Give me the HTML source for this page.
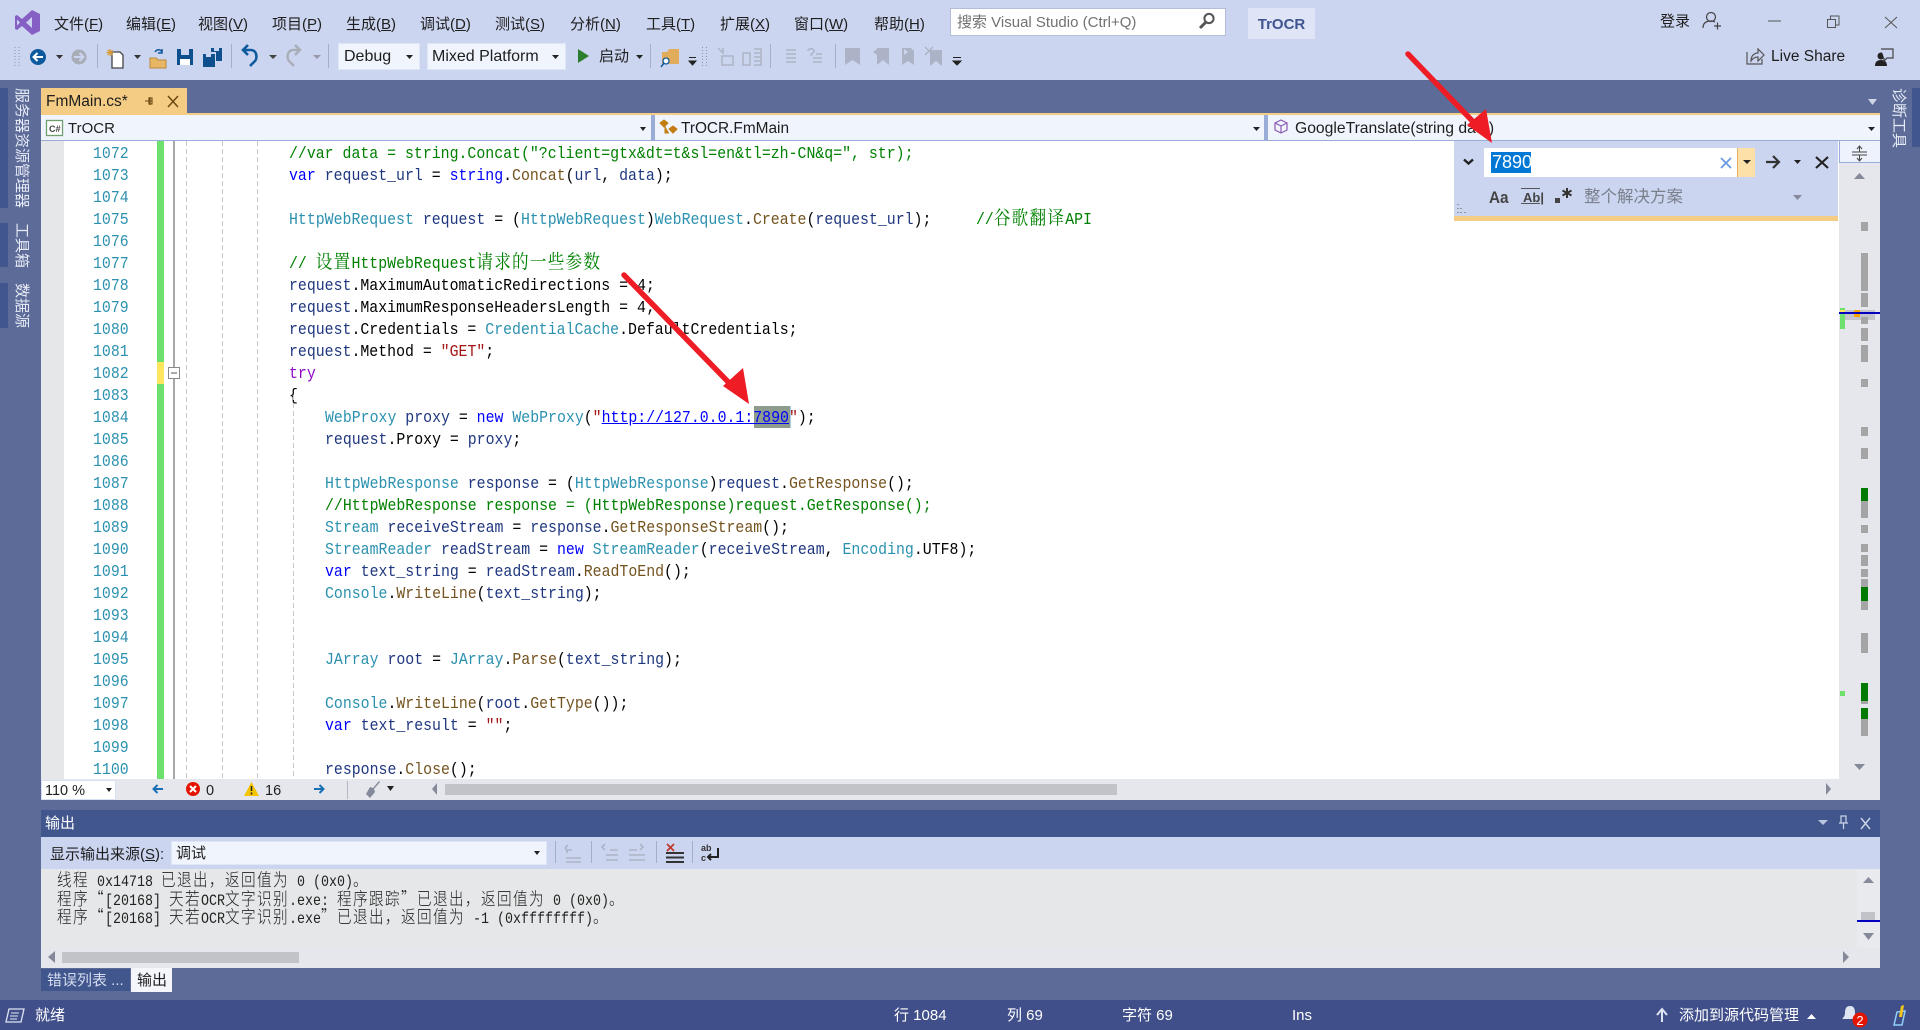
<!DOCTYPE html>
<html lang="zh-CN"><head><meta charset="utf-8"><title>TrOCR</title>
<style>
html,body{margin:0;padding:0;width:1920px;height:1030px;overflow:hidden;background:#5d6b99}
body{position:relative;font-family:"Liberation Sans","Noto Sans CJK SC",sans-serif;font-size:15px;color:#1e1e1e}
.b{position:absolute}
.t{position:absolute;white-space:nowrap;line-height:20px;height:20px;margin-top:1px}
.v{position:absolute;writing-mode:vertical-rl;text-orientation:sideways;white-space:nowrap;color:#e6eaf5;font-size:15px;line-height:20px;width:20px}
.l,.n{position:absolute;white-space:pre;margin-top:1px;font-family:"Liberation Mono","Noto Serif CJK SC",monospace;font-size:17px;line-height:22px;height:22px;transform:scaleX(.8745);transform-origin:0 0}
.n{left:92.5px;color:#2b91af}
.l{color:#000}
.l i{font-style:normal;font-family:"Noto Serif CJK SC",serif;font-size:19px;letter-spacing:1.4px;line-height:0}
.k{color:#0000ff}.y{color:#2b91af}.a{color:#1f377f}.m{color:#74531f}.s{color:#a31515}.c{color:#008000}.p{color:#8f08c4}.u{color:#0000ff;text-decoration:underline}
.o{position:absolute;left:57px;white-space:pre;font-family:"Liberation Mono","Noto Sans CJK SC",monospace;font-size:16px;line-height:18px;height:18px;color:#222;transform:scaleX(.8333);transform-origin:0 0}
.o i{font-style:normal;font-family:"Noto Sans CJK SC",sans-serif;font-weight:300;font-size:17.5px;letter-spacing:1.7px;line-height:0}
svg{position:absolute;left:0;top:0}
</style></head><body>
<!-- top chrome -->
<div class="b" style="left:0;top:0;width:1920px;height:80px;background:#ccd5f0"></div>
<div class="t" style="left:54px;top:14px">文件(<u>F</u>)</div>
<div class="t" style="left:126px;top:14px">编辑(<u>E</u>)</div>
<div class="t" style="left:198px;top:14px">视图(<u>V</u>)</div>
<div class="t" style="left:272px;top:14px">项目(<u>P</u>)</div>
<div class="t" style="left:346px;top:14px">生成(<u>B</u>)</div>
<div class="t" style="left:420px;top:14px">调试(<u>D</u>)</div>
<div class="t" style="left:495px;top:14px">测试(<u>S</u>)</div>
<div class="t" style="left:570px;top:14px">分析(<u>N</u>)</div>
<div class="t" style="left:646px;top:14px">工具(<u>T</u>)</div>
<div class="t" style="left:720px;top:14px">扩展(<u>X</u>)</div>
<div class="t" style="left:794px;top:14px">窗口(<u>W</u>)</div>
<div class="t" style="left:874px;top:14px">帮助(<u>H</u>)</div>
<div class="b" style="left:950px;top:8px;width:274px;height:26px;background:#fff;border:1px solid #b4bcd6"></div>
<div class="t" style="left:957px;top:12px;color:#717171">搜索 Visual Studio (Ctrl+Q)</div>
<div class="b" style="left:1248px;top:8px;width:67px;height:31px;background:#dfe4f7"></div>
<div class="t" style="left:1248px;top:14px;width:67px;text-align:center;font-weight:bold;color:#3f5590">TrOCR</div>
<div class="t" style="left:1660px;top:11px">登录</div>
<div class="b" style="left:338px;top:43px;width:80px;height:25px;background:#f0f4fd;border:1px solid #dfe6f8"></div>
<div class="t" style="left:344px;top:46px;font-size:16px">Debug</div>
<div class="b" style="left:427px;top:43px;width:137px;height:25px;background:#f0f4fd;border:1px solid #dfe6f8"></div>
<div class="t" style="left:432px;top:46px;font-size:16px;width:114px;overflow:hidden">Mixed Platform</div>
<div class="t" style="left:599px;top:46px">启动</div>
<div class="t" style="left:1771px;top:46px;font-size:15.5px">Live Share</div>

<!-- side labels -->
<div class="b" style="left:0;top:88px;width:8px;height:120px;background:#40568d"></div>
<div class="b" style="left:0;top:223px;width:8px;height:44px;background:#40568d"></div>
<div class="b" style="left:0;top:283px;width:8px;height:45px;background:#40568d"></div>
<div class="v" style="left:11px;top:88px">服务器资源管理器</div>
<div class="v" style="left:11px;top:223px">工具箱</div>
<div class="v" style="left:11px;top:283px">数据源</div>
<div class="b" style="left:1912px;top:88px;width:8px;height:59px;background:#40568d"></div>
<div class="v" style="left:1888px;top:88px">诊断工具</div>

<!-- tab -->
<div class="b" style="left:41px;top:88px;width:146px;height:25px;background:#f5cc84"></div>
<div class="t" style="left:46px;top:91px;font-size:15.5px">FmMain.cs*</div>
<div class="b" style="left:41px;top:113px;width:1839px;height:2px;background:#f5cc84"></div>

<!-- nav bar -->
<div class="b" style="left:41px;top:115px;width:1839px;height:25px;background:#f0f4fd;border-bottom:1px solid #9aacd8"></div>
<div class="b" style="left:651px;top:115px;width:4px;height:25px;background:#9aacd8"></div>
<div class="b" style="left:1264px;top:115px;width:4px;height:25px;background:#9aacd8"></div>
<div class="t" style="left:68px;top:118px;font-size:15px">TrOCR</div>
<div class="t" style="left:681px;top:118px;font-size:15.4px">TrOCR.FmMain</div>
<div class="t" style="left:1295px;top:118px;font-size:15.7px">GoogleTranslate(string data)</div>

<!-- editor -->
<div class="b" style="left:41px;top:141px;width:1798px;height:638px;background:#fff"></div>
<div class="b" style="left:41px;top:141px;width:23px;height:638px;background:#e6e7e8"></div>
<div class="b" style="left:157px;top:141px;width:7px;height:638px;background:#6ee06e"></div>
<div class="b" style="left:157px;top:362px;width:7px;height:22px;background:#ffe65c"></div>
<div class="b" style="left:173px;top:141px;width:2px;height:638px;background:#a8a8a8"></div>

<div class="b" style="left:754px;top:406px;width:36px;height:22px;background:#8e9c8e;border-right:1px solid #a8d0e0"></div>

<div class="n" style="top:143px">1072</div><div class="n" style="top:165px">1073</div><div class="n" style="top:187px">1074</div><div class="n" style="top:209px">1075</div><div class="n" style="top:231px">1076</div><div class="n" style="top:253px">1077</div><div class="n" style="top:275px">1078</div><div class="n" style="top:297px">1079</div><div class="n" style="top:319px">1080</div><div class="n" style="top:341px">1081</div><div class="n" style="top:363px">1082</div><div class="n" style="top:385px">1083</div><div class="n" style="top:407px">1084</div><div class="n" style="top:429px">1085</div><div class="n" style="top:451px">1086</div><div class="n" style="top:473px">1087</div><div class="n" style="top:495px">1088</div><div class="n" style="top:517px">1089</div><div class="n" style="top:539px">1090</div><div class="n" style="top:561px">1091</div><div class="n" style="top:583px">1092</div><div class="n" style="top:605px">1093</div><div class="n" style="top:627px">1094</div><div class="n" style="top:649px">1095</div><div class="n" style="top:671px">1096</div><div class="n" style="top:693px">1097</div><div class="n" style="top:715px">1098</div><div class="n" style="top:737px">1099</div><div class="n" style="top:759px">1100</div>

<div class="l c" style="left:289px;top:143px">//var data = string.Concat("?client=gtx&amp;dt=t&amp;sl=en&amp;tl=zh-CN&amp;q=", str);</div>
<div class="l" style="left:289px;top:165px"><span class="k">var</span> <span class="a">request_url</span> = <span class="k">string</span>.<span class="m">Concat</span>(<span class="a">url</span>, <span class="a">data</span>);</div>
<div class="l" style="left:289px;top:209px"><span class="y">HttpWebRequest</span> <span class="a">request</span> = (<span class="y">HttpWebRequest</span>)<span class="y">WebRequest</span>.<span class="m">Create</span>(<span class="a">request_url</span>);     <span class="c">//<i>谷歌翻译</i>API</span></div>
<div class="l c" style="left:289px;top:253px">// <i>设置</i>HttpWebRequest<i>请求的一些参数</i></div>
<div class="l" style="left:289px;top:275px"><span class="a">request</span>.MaximumAutomaticRedirections = 4;</div>
<div class="l" style="left:289px;top:297px"><span class="a">request</span>.MaximumResponseHeadersLength = 4;</div>
<div class="l" style="left:289px;top:319px"><span class="a">request</span>.Credentials = <span class="y">CredentialCache</span>.DefaultCredentials;</div>
<div class="l" style="left:289px;top:341px"><span class="a">request</span>.Method = <span class="s">"GET"</span>;</div>
<div class="l p" style="left:289px;top:363px">try</div>
<div class="l" style="left:289px;top:385px">{</div>
<div class="l" style="left:324.7px;top:407px"><span class="y">WebProxy</span> <span class="a">proxy</span> = <span class="k">new</span> <span class="y">WebProxy</span>(<span class="s">"</span><span class="u">http://127.0.0.1:7890</span><span class="s">"</span>);</div>
<div class="l" style="left:324.7px;top:429px"><span class="a">request</span>.Proxy = <span class="a">proxy</span>;</div>
<div class="l" style="left:324.7px;top:473px"><span class="y">HttpWebResponse</span> <span class="a">response</span> = (<span class="y">HttpWebResponse</span>)<span class="a">request</span>.<span class="m">GetResponse</span>();</div>
<div class="l c" style="left:324.7px;top:495px">//HttpWebResponse response = (HttpWebResponse)request.GetResponse();</div>
<div class="l" style="left:324.7px;top:517px"><span class="y">Stream</span> <span class="a">receiveStream</span> = <span class="a">response</span>.<span class="m">GetResponseStream</span>();</div>
<div class="l" style="left:324.7px;top:539px"><span class="y">StreamReader</span> <span class="a">readStream</span> = <span class="k">new</span> <span class="y">StreamReader</span>(<span class="a">receiveStream</span>, <span class="y">Encoding</span>.UTF8);</div>
<div class="l" style="left:324.7px;top:561px"><span class="k">var</span> <span class="a">text_string</span> = <span class="a">readStream</span>.<span class="m">ReadToEnd</span>();</div>
<div class="l" style="left:324.7px;top:583px"><span class="y">Console</span>.<span class="m">WriteLine</span>(<span class="a">text_string</span>);</div>
<div class="l" style="left:324.7px;top:649px"><span class="y">JArray</span> <span class="a">root</span> = <span class="y">JArray</span>.<span class="m">Parse</span>(<span class="a">text_string</span>);</div>
<div class="l" style="left:324.7px;top:693px"><span class="y">Console</span>.<span class="m">WriteLine</span>(<span class="a">root</span>.<span class="m">GetType</span>());</div>
<div class="l" style="left:324.7px;top:715px"><span class="k">var</span> <span class="a">text_result</span> = <span class="s">""</span>;</div>
<div class="l" style="left:324.7px;top:759px"><span class="a">response</span>.<span class="m">Close</span>();</div>

<!-- editor scrollbar -->
<div class="b" style="left:1839px;top:141px;width:41px;height:638px;background:#e6e7ed"></div>
<div class="b" style="left:1839px;top:141px;width:40px;height:21px;background:#eef2fc;border-bottom:1px solid #9aacd8;border-left:1px solid #9aacd8"></div>
<div class="b" style="left:1861px;top:222px;width:7px;height:9px;background:#a5a5a5"></div>
<div class="b" style="left:1861px;top:253px;width:7px;height:38px;background:#a5a5a5"></div>
<div class="b" style="left:1861px;top:293px;width:7px;height:14px;background:#a5a5a5"></div>
<div class="b" style="left:1845px;top:310px;width:30px;height:10px;background:#c4c5cb"></div>
<div class="b" style="left:1861px;top:317px;width:7px;height:7px;background:#a5a5a5"></div>
<div class="b" style="left:1861px;top:328px;width:7px;height:13px;background:#a5a5a5"></div>
<div class="b" style="left:1861px;top:345px;width:7px;height:17px;background:#a5a5a5"></div>
<div class="b" style="left:1861px;top:379px;width:7px;height:8px;background:#a5a5a5"></div>
<div class="b" style="left:1861px;top:427px;width:7px;height:9px;background:#a5a5a5"></div>
<div class="b" style="left:1861px;top:448px;width:7px;height:11px;background:#a5a5a5"></div>
<div class="b" style="left:1861px;top:488px;width:7px;height:13px;background:#007a00"></div>
<div class="b" style="left:1861px;top:501px;width:7px;height:17px;background:#a5a5a5"></div>
<div class="b" style="left:1861px;top:525px;width:7px;height:8px;background:#a5a5a5"></div>
<div class="b" style="left:1861px;top:544px;width:7px;height:8px;background:#a5a5a5"></div>
<div class="b" style="left:1861px;top:555px;width:7px;height:11px;background:#a5a5a5"></div>
<div class="b" style="left:1861px;top:569px;width:7px;height:8px;background:#a5a5a5"></div>
<div class="b" style="left:1861px;top:579px;width:7px;height:31px;background:#a5a5a5"></div>
<div class="b" style="left:1861px;top:587px;width:7px;height:14px;background:#007a00"></div>
<div class="b" style="left:1861px;top:633px;width:7px;height:20px;background:#a5a5a5"></div>
<div class="b" style="left:1861px;top:701px;width:7px;height:3px;background:#a5a5a5"></div>
<div class="b" style="left:1861px;top:683px;width:7px;height:18px;background:#007a00"></div>
<div class="b" style="left:1861px;top:708px;width:7px;height:11px;background:#007a00"></div>
<div class="b" style="left:1861px;top:719px;width:7px;height:17px;background:#a5a5a5"></div>
<div class="b" style="left:1840px;top:308px;width:5px;height:21px;background:#6ee06e"></div>
<div class="b" style="left:1840px;top:310px;width:5px;height:2px;background:#ffe65c"></div>
<div class="b" style="left:1840px;top:691px;width:5px;height:5px;background:#6ee06e"></div>
<div class="b" style="left:1854px;top:310px;width:6px;height:7px;background:#ffa500"></div>
<div class="b" style="left:1839px;top:312px;width:41px;height:2px;background:#0000c0"></div>

<!-- find widget -->
<div class="b" style="left:1454px;top:141px;width:384px;height:75px;background:#ccd5f0"></div>
<div class="b" style="left:1454px;top:216px;width:384px;height:5px;background:#f5cc84"></div>
<div class="b" style="left:1484px;top:148px;width:253px;height:29px;background:#fff"></div>
<div class="b" style="left:1737px;top:148px;width:18px;height:29px;background:#fde0a8;border-left:1px solid #e0b060;box-sizing:border-box"></div>
<div class="b" style="left:1491px;top:152px;width:40px;height:21px;background:#0078d4"></div>
<div class="t" style="left:1492px;top:151px;font-size:18px;color:#fff">7890</div>
<div class="t" style="left:1489px;top:187px;font-size:17px;color:#444;font-weight:bold;transform:scaleX(.9);transform-origin:0 0">Aa</div>
<div class="t" style="left:1523px;top:187px;font-size:13px;color:#444;font-weight:bold">Ab|</div>
<div class="b" style="left:1521px;top:188px;width:19px;height:1px;background:#555"></div>
<div class="b" style="left:1521px;top:203px;width:19px;height:1px;background:#555"></div>
<div class="t" style="left:1584px;top:186px;font-size:16.5px;color:#7a7f8c">整个解决方案</div>

<!-- editor bottom bar -->
<div class="b" style="left:41px;top:779px;width:1839px;height:21px;background:#e6e7ed"></div>
<div class="b" style="left:41px;top:780px;width:73px;height:18px;background:#fff;border:1px solid #d8e0f4"></div>
<div class="t" style="left:45px;top:780px;font-size:14.5px">110 %</div>
<div class="t" style="left:206px;top:780px;font-size:14.5px">0</div>
<div class="t" style="left:265px;top:780px;font-size:14.5px">16</div>
<div class="b" style="left:445px;top:784px;width:672px;height:11px;background:#c2c3c9"></div>

<!-- output -->
<div class="b" style="left:41px;top:810px;width:1839px;height:27px;background:#40568d"></div>
<div class="t" style="left:45px;top:813px;color:#fff">输出</div>
<div class="b" style="left:41px;top:837px;width:1839px;height:32px;background:#ccd5f0"></div>
<div class="t" style="left:50px;top:844px">显示输出来源(<u>S</u>):</div>
<div class="b" style="left:171px;top:841px;width:374px;height:22px;background:#f0f4fd;border:1px solid #dfe6f8"></div>
<div class="t" style="left:176px;top:843px">调试</div>
<div class="b" style="left:41px;top:869px;width:1839px;height:99px;background:#e6e7e8"></div>
<div class="b" style="left:1857px;top:869px;width:23px;height:80px;background:#e9eaee"></div>
<div class="b" style="left:41px;top:948px;width:1839px;height:20px;background:#e6e7ed"></div>
<div class="b" style="left:62px;top:952px;width:237px;height:11px;background:#c2c3c9"></div>
<div class="b" style="left:1861px;top:912px;width:14px;height:9px;background:#c2c3c9"></div>
<div class="b" style="left:1857px;top:920px;width:23px;height:2px;background:#0000c0"></div>
<div class="o" style="top:873px"><i>线程</i> 0x14718 <i>已退出，返回值为</i> 0 (0x0)<i>。</i></div>
<div class="o" style="top:892px"><i>程序“</i>[20168] <i>天若</i>OCR<i>文字识别</i>.exe: <i>程序跟踪”已退出，返回值为</i> 0 (0x0)<i>。</i></div>
<div class="o" style="top:910px"><i>程序“</i>[20168] <i>天若</i>OCR<i>文字识别</i>.exe<i>”已退出，返回值为</i> -1 (0xffffffff)<i>。</i></div>

<!-- bottom tabs -->
<div class="b" style="left:41px;top:969px;width:89px;height:22px;background:#40568d"></div>
<div class="t" style="left:47px;top:970px;color:#d5dcf0">错误列表 ...</div>
<div class="b" style="left:131px;top:968px;width:41px;height:24px;background:#f5f6fb"></div>
<div class="t" style="left:137px;top:970px">输出</div>

<!-- status bar -->
<div class="b" style="left:0;top:1000px;width:1920px;height:30px;background:#404f8a"></div>
<div class="t" style="left:35px;top:1005px;color:#fff">就绪</div>
<div class="t" style="left:894px;top:1005px;color:#fff">行 1084</div>
<div class="t" style="left:1007px;top:1005px;color:#fff">列 69</div>
<div class="t" style="left:1122px;top:1005px;color:#fff">字符 69</div>
<div class="t" style="left:1292px;top:1005px;color:#fff">Ins</div>
<div class="t" style="left:1679px;top:1005px;color:#fff">添加到源代码管理</div>

<svg width="1920" height="1030" viewBox="0 0 1920 1030">
<!-- VS logo -->
<path fill="#865fc5" fill-rule="evenodd" d="M32 10L40 14V31L32 35L22 26L17 30L15 29V16L17 15L22 19ZM32 17L26 22.5L32 28ZM17 19.5V25.5L20 22.5Z"/>
<!-- search magnifier -->
<circle cx="1209" cy="18.5" r="4.6" fill="none" stroke="#555" stroke-width="2"/><path d="M1206 22L1200 28" stroke="#555" stroke-width="3"/>
<!-- person -->
<circle cx="1711" cy="17" r="4.5" fill="none" stroke="#444" stroke-width="1.2"/><path d="M1703 28c0-5 3-7 8-7 2 0 3 .3 4 1" fill="none" stroke="#444" stroke-width="1.2"/><path d="M1714 26h7M1717.5 22.5v7" stroke="#444" stroke-width="1.2"/>
<!-- window buttons -->
<path d="M1768 21h13" stroke="#555" stroke-width="1"/>
<path d="M1827.5 19.5h8v8h-8zM1830.5 19v-3h8.500v9h-3" fill="none" stroke="#555"/>
<path d="M1885 17L1897 28M1897 17L1885 28" stroke="#555"/>
<!-- toolbar grips -->
<path d="M15 47v20M19 47v20M702.500 47v20M706.500 47v20" stroke="#8a93ad" stroke-dasharray="1 2"/>
<!-- back / forward -->
<circle cx="38" cy="57" r="8" fill="#0e5a9e"/><path d="M43 57H34M37.500 53L33.500 57L37.500 61" fill="none" stroke="#fff" stroke-width="2"/>
<path d="M56 55h7l-3.500 4z" fill="#333"/>
<circle cx="79" cy="57" r="7.500" fill="#a9adb8"/><path d="M74 57h9M79.500 53l4 4-4 4" fill="none" stroke="#ccd5f0" stroke-width="2"/>
<g stroke="#a3aec9"><path d="M97.500 44v24M231.500 44v24M328.500 44v24M650.500 44v24M770.500 44v24M835.500 44v24"/></g>
<!-- new project -->
<path d="M112 52h8l3 3v13h-11z" fill="#fff" stroke="#444" stroke-width="1.300"/><path d="M110 49v7M106.500 52.500h7M107.500 50l5 5M112.500 50l-5 5" stroke="#d89b3a" stroke-width="1.200"/>
<path d="M134 55h7l-3.500 4z" fill="#333"/>
<!-- open -->
<path d="M150 58h6l2 2h8v8h-16z" fill="#e8b765" stroke="#b98a3c"/><path d="M155 52c2-3 5-3 7 0M162 49v4h-4" fill="none" stroke="#0e5a9e" stroke-width="1.500"/>
<!-- save -->
<path d="M177 49h16v16h-16z" fill="#0e4f8e"/><path d="M181 49h8v6h-8z" fill="#ccd5f0"/><path d="M180 59h10v6h-10z" fill="#fff"/>
<path d="M203 54h12v13h-12z" fill="#0e4f8e"/><path d="M211 48h11v13h-6v-9h-5z" fill="#0e4f8e"/><path d="M206 54h5v3h-5zM214 48h5v3h-5z" fill="#ccd5f0"/>
<!-- undo redo -->
<path d="M244 50h7c6 0 7 9 3 12l-4 4M248 45l-5 5 5 5" fill="none" stroke="#0e5a9e" stroke-width="2.600"/>
<path d="M269 55h8l-4 4z" fill="#444"/>
<path d="M299 50h-6c-6 0-7 9-3 12l4 4M295 45l5 5-5 5" fill="none" stroke="#a9adb8" stroke-width="2.400"/>
<path d="M313 55h8l-4 4z" fill="#99a"/>
<path d="M406 55h7l-3.500 4zM552 55h7l-3.500 4zM636 55h7l-3.500 4z" fill="#222"/>
<path d="M578 49l11 7-11 7z" fill="#2c7d2c"/>
<!-- find in files -->
<path d="M662 52h5l2-3h10v15h-17z" fill="#e2ad5a"/><circle cx="666" cy="61" r="3" fill="#fff" stroke="#0e5a9e" stroke-width="1.300"/><path d="M664 63l-3 4" stroke="#0e5a9e" stroke-width="1.500"/>
<path d="M689 57.500h7M689 61h7l-3.500 4z" stroke="#222" fill="#222"/>
<path d="M953 57.500h8M953 61h8l-4 4z" stroke="#222" fill="#222"/>
<!-- disabled icons -->
<g fill="none" stroke="#adb3c6" stroke-width="1.500">
<path d="M718 48l5 5v-5M722 56h11v9h-11zM743 53h7v12h-7zM754 49h7v16h-7M754 53h7M754 57h7M754 61h7"/>
<path d="M786 50h10M786 54h10M786 58h10M786 62h10M808 51c0-3 6-3 6 0 0 2-3 2-3 5M816 54h6M813 58h9M813 62h9"/>
</g>
<path d="M845 48h15v17l-7.500-5-7.500 5z" fill="#adb3c6"/>
<path d="M877 48h12v17l-6-5-6 5zM873 52l4-3v6zM911 48h-9v17l6-4 6 4v-14zM900 52h7M904 49l4 3-4 3" fill="#adb3c6"/>
<path d="M930 50h12v16l-6-5-6 5z" fill="#adb3c6"/><path d="M925 47l8 8M933 47l-8 8" stroke="#adb3c6" stroke-width="1.500"/>
<!-- live share -->
<path d="M1747 52v12h15v-5M1751 61c0-6 4-8 7-8v-4l6 6-6 6v-4c-3 0-5 1-7 4z" fill="none" stroke="#555" stroke-width="1.200"/>
<!-- feedback -->
<circle cx="1881" cy="56" r="3.500" fill="#222"/><path d="M1875 66c0-4 2-6 6-6s6 2 6 6z" fill="#222"/><path d="M1881 49h12v9h-6l-3 3v-3" fill="#ccd5f0" stroke="#444" stroke-width="1.200"/>
<!-- tab icons -->
<path d="M1868 99h9l-4.500 6z" fill="#cfd6e5"/>
<path d="M147 101h5M150 97v8M152 98v6h-3v-6zM145 101h3" stroke="#6b4a10" stroke-width="1.100" fill="none"/>
<path d="M168 96l10 11M178 96l-10 11" stroke="#6b4a10" stroke-width="1.500"/>
<!-- nav icons -->
<rect x="46.500" y="120.500" width="16" height="15" fill="#fff" stroke="#6f9e6f" stroke-width="1.300"/>
<text x="49" y="132" font-family="Liberation Sans" font-size="9" font-weight="bold" fill="#444">C#</text>
<path d="M640 127h6l-3 4zM1253 127h7l-3.500 4zM1868 127h7l-3.500 4z" fill="#222"/>
<path d="M664 120l4 3-4 4-4-4zM673 126l4 3-4 4-4-4zM665 126v7h4" fill="#c17d11" stroke="#c17d11"/>
<path d="M1275 123l6-3 6 3v7l-6 3-6-3zM1275 123l6 3 6-3M1281 126v7" fill="none" stroke="#8a5cb0" stroke-width="1.200"/>
<!-- guides -->
<g stroke="#c8c8c8" stroke-dasharray="5 3"><path d="M186.500 141V779M222.500 141V779M257.500 141V779M293.500 395V779"/></g>
<rect x="168.500" y="367.500" width="11" height="11" fill="#fff" stroke="#8a8a8a"/><path d="M171 373h6" stroke="#555"/>
<!-- scrollbar arrows & split -->
<path d="M1859.500 147v5M1852 152h15M1852 155h15M1859.500 155v5M1857 149l2.500-3 2.500 3M1857 158l2.500 3 2.500-3" stroke="#444" fill="none"/>
<path d="M1854 179l5.500-6 5.500 6zM1854 764h11l-5.500 6z" fill="#868999"/>
<!-- find widget icons -->
<path d="M1464 159.500l4.500 4 4.500-4" fill="none" stroke="#222" stroke-width="2.400"/>
<path d="M1721 158l10 10M1731 158l-10 10" stroke="#6a9ae0" stroke-width="1.800"/>
<path d="M1743 160h8l-4 4z" fill="#222"/>
<path d="M1766 162h13M1773 156l6 6-6 6" fill="none" stroke="#333" stroke-width="2.200"/>
<path d="M1794 160h7l-3.500 4z" fill="#222"/>
<path d="M1816 157l12 11M1828 157l-12 11" stroke="#222" stroke-width="2.200"/>
<path d="M1555 198h5v5h-5z" fill="#444"/><path d="M1567 188v10M1562.500 190.500l9 5M1571.500 190.500l-9 5" stroke="#333" stroke-width="2"/>
<path d="M1793 195h9l-4.500 5z" fill="#868999"/>
<path d="M1458 204v1M1458 208v1M1458 212v1M1461 208v1M1461 212v1M1465 212v1" stroke="#555"/>
<!-- editor bottom bar icons -->
<path d="M106 788h6l-3 4z" fill="#222"/>
<path d="M163 789h-9M157.500 785l-4 4 4 4M314 789h9M319.500 785l4 4-4 4" fill="none" stroke="#1a6fb5" stroke-width="2"/>
<circle cx="193" cy="789" r="7" fill="#e51400"/><path d="M190 786l6 6M196 786l-6 6" stroke="#fff" stroke-width="2"/>
<path d="M251.500 782l7.500 14h-15z" fill="#f4c400"/><path d="M251.500 786v5M251.500 792.500v2" stroke="#222" stroke-width="1.500"/>
<path d="M347.500 781v18" stroke="#b5b8c6"/>
<path d="M379 781l-6 7-3-1-4 7 4 4 5-6-1-3 6-7z" fill="#868999"/><path d="M387 786h7l-3.500 5z" fill="#222"/>
<path d="M437 783v12l-5-6zM1826 783v12l5-6z" fill="#868999"/>
<!-- output icons -->
<path d="M1818 820h10l-5 5z" fill="#bcc6de"/>
<path d="M1841 816h5v7h-5zM1839 823h9M1843.500 823v6" fill="none" stroke="#cdd5e8" stroke-width="1.200"/>
<path d="M1861 818l9 11M1870 818l-9 11" stroke="#cdd5e8" stroke-width="1.400"/>
<path d="M534 851h6l-3 4z" fill="#222"/>
<g stroke="#a3aec9"><path d="M555.500 841v22M591.500 841v22M656.500 841v22M692.500 841v22"/></g>
<g fill="none" stroke="#adb3c6" stroke-width="1.600"><path d="M572 850h-5v3M565 848l3-3M565 848l3 3M566 858h15M566 862h15M610 850h8M605 844l-3 3 3 3M606 855h12M606 860h12M629 850h8M640 844l3 3-3 3M629 855h16M629 860h16"/></g>
<path d="M667 844l7 7M674 844l-7 7" stroke="#c0392b" stroke-width="1.800"/><path d="M666 853h18M666 857.500h18M666 862h18" stroke="#333" stroke-width="2"/>
<text x="701" y="851" font-family="Liberation Sans" font-size="9" font-weight="bold" fill="#333">ab</text><text x="701" y="861" font-family="Liberation Sans" font-size="9" font-weight="bold" fill="#333">c</text>
<path d="M718 848v9h-10M711 854l-3 3 3 3" fill="none" stroke="#222" stroke-width="2"/>
<path d="M1863 883l5.500-6 5.500 6zM1863 933h11l-5.500 7z" fill="#868999"/>
<path d="M55 951v12l-7-6zM1843 951v12l6-6z" fill="#868999"/>
<!-- status icons -->
<path d="M9 1009h15l-3 13H6z" fill="none" stroke="#dfe4f2" stroke-width="1.300"/><path d="M11 1013h8M10 1016h8M10 1019h7" stroke="#dfe4f2"/>
<path d="M1662 1022v-12M1657 1015l5-6 5 6" fill="none" stroke="#dfe4f2" stroke-width="2"/>
<path d="M1807 1019l4.500-5 4.500 5z" fill="#fff"/>
<path d="M1850 1006c-4 0-5 3-5 7 0 3-2 5-3 6h15c-1-1-2-3-2-6 0-4-1-7-5-7z" fill="#dfe4f2"/>
<circle cx="1860" cy="1020" r="7.500" fill="#e51400"/><text x="1860" y="1025" text-anchor="middle" font-family="Liberation Sans" font-size="13" fill="#fff">2</text>
<path d="M1897 1012l8-1-3 14h-8z" fill="none" stroke="#8fd0f5" stroke-width="1.500"/><path d="M1901 1006l3-1-2 12h-3z" fill="#f5c518"/>
<!-- red arrows -->
<path d="M1408 54L1482 131" stroke="#ee1c25" stroke-width="5.500" stroke-linecap="round"/>
<path d="M1492 143L1467 125L1486 109Z" fill="#ee1c25"/>
<path d="M624 275L738 392" stroke="#ee1c25" stroke-width="5.500" stroke-linecap="round"/>
<path d="M749 404L723 386L743 368Z" fill="#ee1c25"/>
</svg>
</body></html>
